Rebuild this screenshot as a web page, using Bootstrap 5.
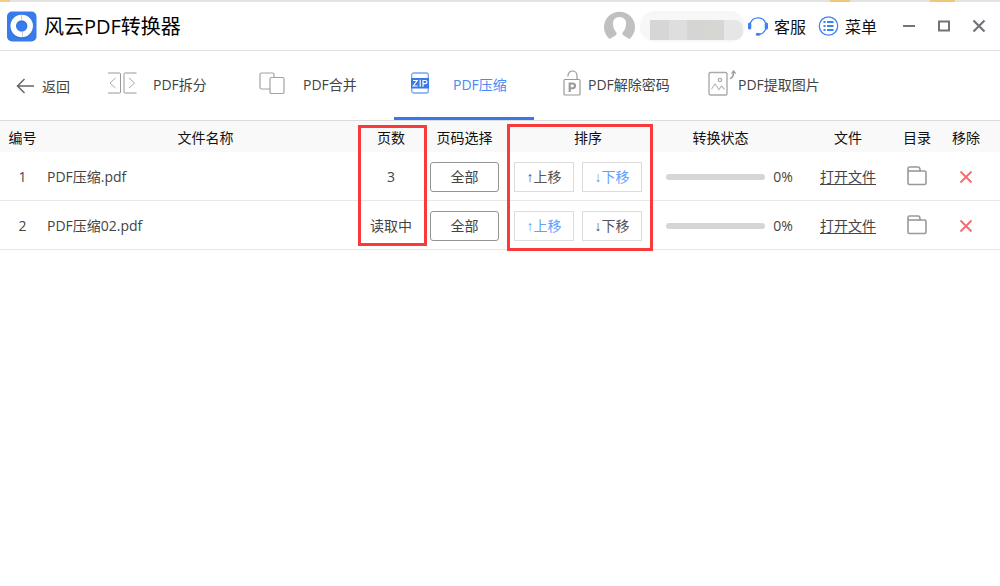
<!DOCTYPE html>
<html lang="zh-CN">
<head>
<meta charset="utf-8">
<meta name="viewport" content="width=device-width, initial-scale=1">
<title>风云PDF转换器</title>
<link rel="stylesheet" href="https://cdn.jsdelivr.net/npm/bootstrap@5.3.0/dist/css/bootstrap.min.css">
<style>
  :root { --brand: #3879e6; --line: #e0e0e0; --ink: #444; }
  body { font-family: "Open Sans", "Noto Sans CJK SC", sans-serif; font-size: 14px; line-height: 20px; color: var(--ink); background: #fff; }
  svg { display: block; flex: none; }
  .bg-strip { height: 2px; background: linear-gradient(90deg, #f3cd83 0 1%, #e3e3e3 1% 83%, #eec779 83% 85%, #e3e3e3 85% 93%, #eec779 93% 95.5%, #e3e3e3 95.5%); }
  .title-bar { height: 49px; padding-left: 6px; padding-right: 14px; border-bottom: 1px solid var(--line); }
  .app-title { font-size: 20px; line-height: 28px; color: #000; font-weight: 400; margin-left: 7px; padding-top: 2px; }
  .plain { border: 0; background: none; padding: 0; color: inherit; }
  .top-action { font-size: 16px; line-height: 24px; color: #111; gap: 6px; }
  .top-action span { padding-top: 2px; }
  .masked-name { width: 105px; height: 31px; border-radius: 15px; padding: 9px 2px 2px 10px; background: #f7f7f7; margin-left: 5px; margin-right: 3px; }
  .masked-name span { flex: 1; }
  .masked-name span:last-child { border-radius: 0 8px 8px 0; }
  .win-buttons { gap: 21px; margin-left: 25px; }
  .tool-bar { height: 70px; border-bottom: 1px solid #dcdcdc; }
  .back-btn { width: 94px; padding-left: 16px; gap: 7px; }
  .back-btn span { padding-top: 3px; }
  .tool-tabs { gap: 10px; }
  .tool-tab { width: 140px; height: 69px; padding: 0 0 2px 13px; border-bottom: 3px solid transparent; gap: 16px; white-space: nowrap; }
  .tool-tab.tight { gap: 1px; }
  .tool-tab.active { color: #4a8af4; border-bottom-color: var(--brand); }
  .tab-icon { width: 30px; flex: none; display: flex; justify-content: center; }
  .files { table-layout: fixed; width: 100%; border-collapse: separate; border-spacing: 0; }
  .files th { height: 31px; padding: 2px 0 0; background: #f9f9f9; color: #111; font-weight: 400; text-align: center; }
  .files td { height: 49px; padding: 2px 0 0; border-bottom: 1px solid #e8e8e8; text-align: center; vertical-align: middle; }
  .files .name-head { padding-left: 12px; }
  .files .sort-head { padding-left: 20px; }
  .files .state-head { padding-right: 18px; }
  .files .last-col { padding-right: 10px; }
  .files .file-name { text-align: left; padding-left: 2px; }
  .files button { vertical-align: middle; }
  .files .plain { margin-bottom: 3px; }
  .box-btn { height: 30px; background: #fff; color: var(--ink); padding: 0; font-size: 14px; line-height: 20px; }
  .range-btn { width: 69px; border: 1px solid #949494; border-radius: 3px; }
  .move-btn { width: 60px; border: 1px solid #dcdcdc; color: #555; font-family: "Liberation Sans", "Noto Sans CJK SC", sans-serif; }
  .move-btn.hot { color: #5ea2fb; }
  .state-bar { width: 99px; height: 6px; border-radius: 3px; background: #d6d6d6; }
  .open-link { color: var(--ink); text-underline-offset: 2px; }
  .mark-frame { position: absolute; border: 3px solid #f83a3a; pointer-events: none; }
  .frame-pages { top: 4px; right: 573px; width: 69px; height: 121px; }
  .frame-sort { top: 3px; right: 347px; width: 146px; height: 127px; }
</style>
</head>
<body>
<svg class="d-none" aria-hidden="true">
  <symbol id="folder" viewBox="0 0 20 20"><g fill="none" stroke="#999" stroke-width="1.6"><path d="M1 17V2.500Q1 1 2.500 1H11Q12.500 1 12.800 2.500L13.200 5H17.500Q19 5 19 6.500V17Q19 18.500 17.500 18.500H2.500Q1 18.500 1 17Z"/><path d="M1 5H13.500"/></g></symbol>
  <symbol id="remove" viewBox="0 0 14 14"><path d="M1.500 1.500L12.500 12.500M12.500 1.500L1.500 12.500" stroke="#f66a6a" stroke-width="1.8" fill="none"/></symbol>
</svg>
<div class="bg-strip"></div>
<header class="title-bar d-flex align-items-center">
  <svg width="31" height="31" viewBox="0 0 31 31"><rect x="1" y=".5" width="29.500" height="30" rx="5" fill="#387ceb"/><circle cx="15.700" cy="16.500" r="8.500" fill="none" stroke="#2864c5" stroke-width="5.500" opacity=".4"/><circle cx="15.700" cy="15" r="8.500" fill="none" stroke="#fff" stroke-width="5.500"/><path d="M15.500 4v5.500M16.500 20.500v5.500" stroke="#b8cdf0"/></svg>
  <h1 class="app-title mb-0">风云PDF转换器</h1>
  <div class="d-flex align-items-center ms-auto">
    <svg width="32" height="30" viewBox="0 0 32 30"><path d="M6.500 28A15.500 15.500 0 1 1 26.500 28L20.500 24.500Q18.500 23 20 21Q23 18 23 12.500Q23 6 16.500 6Q10 6 10 12.500Q10 18 13 21Q14.500 23 12.500 24.500Z" fill="#c0c0c0"/></svg>
    <div class="masked-name d-flex"><span style="background:#d6d6d6"></span><span style="background:#dedede"></span><span style="background:#d5d5d4"></span><span style="background:#d6d6d2"></span><span style="background:#e6e6e6"></span></div>
    <button type="button" class="plain top-action d-flex align-items-center">
      <svg width="20" height="20" viewBox="0 0 20 20"><path d="M2.200 7.500A8.200 8.200 0 0 1 17.800 7.500M17.800 13Q16 17.500 11 18.500" fill="none" stroke="#3d81f2" stroke-width="1.300"/><rect y="6.500" width="3.300" height="7" rx="1.600" fill="#3d81f2"/><rect x="16.700" y="6.500" width="3.300" height="7" rx="1.600" fill="#3d81f2"/><ellipse cx="10" cy="18.300" rx="2.400" ry="1.500" fill="#3d81f2"/></svg>
      <span>客服</span>
    </button>
    <button type="button" class="plain top-action d-flex align-items-center ms-2 ps-1">
      <svg width="21" height="20" viewBox="0 0 21 20"><circle cx="10.500" cy="10" r="9.200" fill="none" stroke="#3d81f2" stroke-width="1.300"/><path d="M5.500 6h2M5.500 10h2M5.500 14h2M9 6h6.500M9 10h6.500M9 14h6.500" stroke="#3d81f2" stroke-width="1.800"/></svg>
      <span>菜单</span>
    </button>
    <div class="win-buttons d-flex align-items-center">
      <button type="button" class="plain" aria-label="最小化"><svg width="14" height="14" viewBox="0 0 14 14"><path d="M1 7H13" stroke="#757279" stroke-width="2"/></svg></button>
      <button type="button" class="plain" aria-label="最大化"><svg width="14" height="14" viewBox="0 0 14 14"><rect x="2" y="2.500" width="10" height="9" fill="none" stroke="#757279" stroke-width="2"/></svg></button>
      <button type="button" class="plain" aria-label="关闭"><svg width="14" height="14" viewBox="0 0 14 14"><path d="M1.500 1.500L12.500 12.500M12.500 1.500L1.500 12.500" stroke="#757279" stroke-width="2.200"/></svg></button>
    </div>
  </div>
</header>
<nav class="tool-bar d-flex">
  <button type="button" class="plain back-btn d-flex align-items-center">
    <svg width="19" height="16" viewBox="0 0 19 16"><path d="M8.500 1L1.500 8L8.500 15M1.500 8H18" fill="none" stroke="#666" stroke-width="1.500"/></svg>
    <span>返回</span>
  </button>
  <div class="tool-tabs d-flex">
    <button type="button" class="plain tool-tab d-flex align-items-center"><span class="tab-icon"><svg width="30" height="22" viewBox="0 0 30 22"><path d="M1 1H12.500Q13.500 1 13.500 2V20.500Q13.500 21 12.500 21H1M29.500 1H18Q17 1 17 2V20.500Q17 21 18 21H29.500" fill="none" stroke="#999"/><path d="M8.500 6L3 11L8.500 16M22 6L27.500 11L22 16" fill="none" stroke="#aaa"/></svg></span><span class="pt-1">PDF拆分</span></button>
    <button type="button" class="plain tool-tab d-flex align-items-center"><span class="tab-icon"><svg width="26" height="22" viewBox="0 0 26 22"><g fill="#fff" stroke="#a2a2a2" stroke-width="1.200"><rect x="1" y="1" width="14" height="16" rx="1.500"/><rect x="11" y="5.500" width="14" height="16" rx="1.500"/></g></svg></span><span class="pt-1">PDF合并</span></button>
    <button type="button" class="plain tool-tab active d-flex align-items-center" aria-current="page"><span class="tab-icon pe-1"><svg width="18" height="22" viewBox="0 0 18 22"><rect x=".7" y="1" width="16.600" height="20" rx="2" fill="#fff" stroke="#72a5f5" stroke-width="1.300"/><rect y="6" width="18" height="10.500" fill="#3879e6"/><path d="M2 8.500h4.200l-4 5.500h4.500M9.200 7.800v6.900M12 14.700V8.500h2.300q1.700 0 1.700 1.600t-1.700 1.600h-2.300" fill="none" stroke="#fff" stroke-width="1.200"/></svg></span><span class="pt-1">PDF压缩</span></button>
    <button type="button" class="plain tool-tab tight d-flex align-items-center"><span class="tab-icon"><svg width="18" height="26" viewBox="0 0 18 26"><rect x="1" y="9.500" width="16" height="15.500" rx="1" fill="none" stroke="#999" stroke-width="1.200"/><path d="M5 6.500V5.500A4.500 4.500 0 0 1 14 5.500V9.500" fill="none" stroke="#999" stroke-width="1.200"/><path d="M6.700 22V13.500H9.500Q12 13.500 12 15.800T9.500 18.200H6.700" fill="none" stroke="#999" stroke-width="2.100"/></svg></span><span class="pt-1">PDF解除密码</span></button>
    <button type="button" class="plain tool-tab tight d-flex align-items-center"><span class="tab-icon"><svg width="28" height="26" viewBox="0 0 28 26"><rect x="1" y="2.500" width="18" height="22.500" rx="1.500" fill="none" stroke="#aaa" stroke-width="1.400"/><circle cx="12" cy="10" r="1.700" fill="none" stroke="#aaa" stroke-width="1.200"/><path d="M3.500 19L7 14L11 19.500L13.500 16L16.500 19.500" fill="none" stroke="#bbb" stroke-width="1.200"/><path d="M22 8.500Q25.500 8 25.500 2" fill="none" stroke="#999" stroke-width="1.500"/><path d="M23.500 3.500L25.500 1L27.700 3.500" fill="none" stroke="#999" stroke-width="1.200"/></svg></span><span class="pt-1">PDF提取图片</span></button>
  </div>
</nav>
<main class="position-relative pb-3">
  <table class="files">
    <colgroup><col style="width:45px"><col><col style="width:74px"><col style="width:73px"><col style="width:154px"><col style="width:149px"><col style="width:88px"><col style="width:50px"><col style="width:58px"></colgroup>
    <thead><tr><th>编号</th><th class="name-head">文件名称</th><th>页数</th><th>页码选择</th><th class="sort-head">排序</th><th class="state-head">转换状态</th><th>文件</th><th>目录</th><th class="last-col">移除</th></tr></thead>
    <tbody>
      <tr>
        <td>1</td><td class="file-name">PDF压缩.pdf</td><td>3</td>
        <td><button type="button" class="box-btn range-btn">全部</button></td>
        <td><div class="d-flex justify-content-center gap-2"><button type="button" class="box-btn move-btn">↑上移</button><button type="button" class="box-btn move-btn hot">↓下移</button></div></td>
        <td><div class="d-flex align-items-center justify-content-center gap-2"><div class="state-bar" role="progressbar" aria-valuenow="0"></div><span>0%</span></div></td>
        <td><a href="#" class="open-link">打开文件</a></td>
        <td><button type="button" class="plain" aria-label="目录"><svg width="20" height="20"><use href="#folder"/></svg></button></td>
        <td class="last-col"><button type="button" class="plain" aria-label="移除"><svg width="14" height="14"><use href="#remove"/></svg></button></td>
      </tr>
      <tr>
        <td>2</td><td class="file-name">PDF压缩02.pdf</td><td>读取中</td>
        <td><button type="button" class="box-btn range-btn">全部</button></td>
        <td><div class="d-flex justify-content-center gap-2"><button type="button" class="box-btn move-btn hot">↑上移</button><button type="button" class="box-btn move-btn">↓下移</button></div></td>
        <td><div class="d-flex align-items-center justify-content-center gap-2"><div class="state-bar" role="progressbar" aria-valuenow="0"></div><span>0%</span></div></td>
        <td><a href="#" class="open-link">打开文件</a></td>
        <td><button type="button" class="plain" aria-label="目录"><svg width="20" height="20"><use href="#folder"/></svg></button></td>
        <td class="last-col"><button type="button" class="plain" aria-label="移除"><svg width="14" height="14"><use href="#remove"/></svg></button></td>
      </tr>
    </tbody>
  </table>
  <div class="mark-frame frame-pages"></div>
  <div class="mark-frame frame-sort"></div>
</main>
<script src="https://cdn.jsdelivr.net/npm/bootstrap@5.3.0/dist/js/bootstrap.bundle.min.js"></script>
</body>
</html>
